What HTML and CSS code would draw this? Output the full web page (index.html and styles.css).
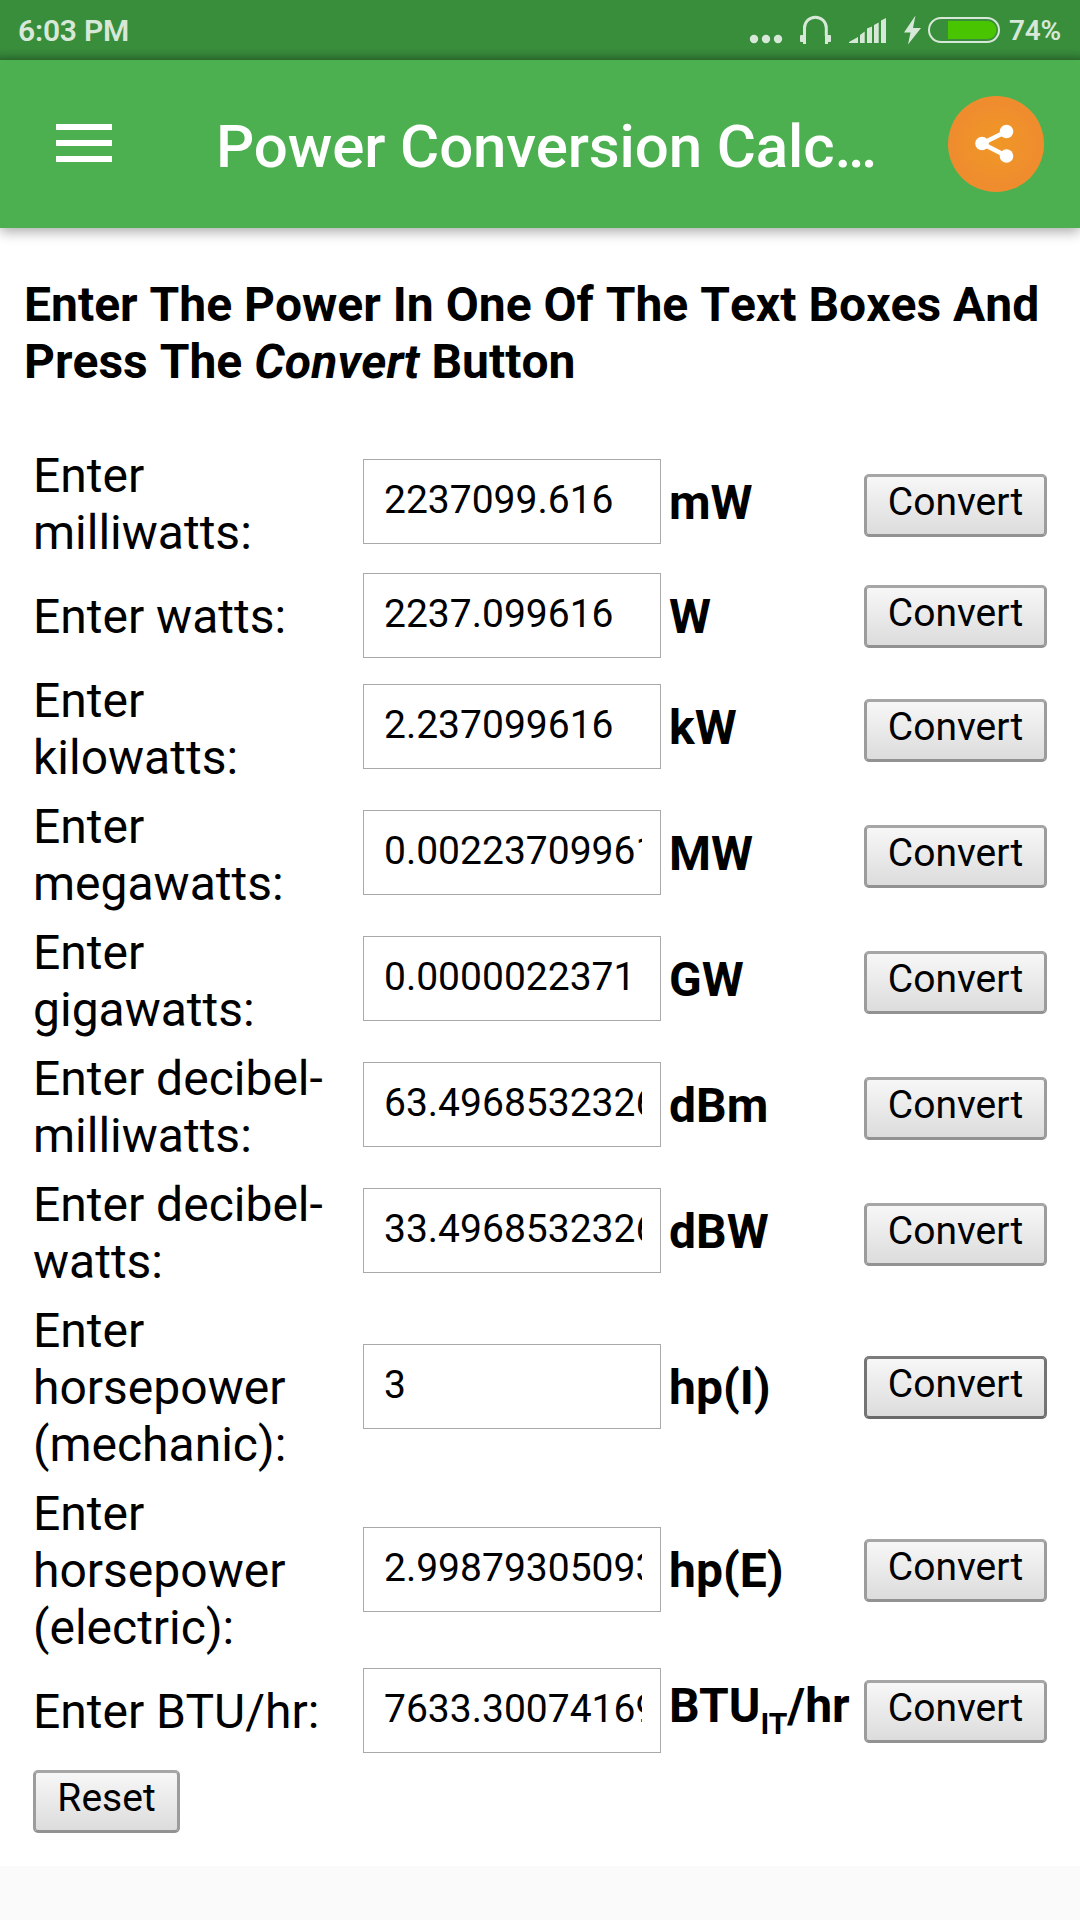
FILE: index.html
```html
<!DOCTYPE html>
<html>
<head>
	<meta charset="utf-8">
	<title>Power Conversion Calculator</title>
	<link rel="stylesheet" href="styles.css">
</head>
<body>
	<div class="statusbar">
		<span class="clock">6:03 PM</span>
		<svg class="status-icons" width="260" height="60" viewBox="745 0 260 60">
			<g fill="#d8e8d8">
				<circle cx="754" cy="39" r="4.2"/>
				<circle cx="766" cy="39" r="4.2"/>
				<circle cx="778" cy="39" r="4.2"/>
				<path d="M800 36q0-1 1-1h5v9h-3v-2h-2q-1 0-1-1zM831 36q0-1-1-1h-5v9h3v-2h2q1 0 1-1z"/>
				<path d="M849 43v-1l9-5v6zM860 43v-8l4.700-3.500v11.500zM867 43v-14.500l5-2v16.500zM874 43v-18l4.700-2.500v20.500zM881 43v-22.500l5-2.500v25z"/>
				<path d="M915.500 15.500L904 32.500h6.500L908 44.500L921 28h-8z"/>
			</g>
			<path d="M804.500 36V28a10.900 10.900 0 0 1 21.800 0V36" fill="none" stroke="#d8e8d8" stroke-width="3"/>
			<rect x="929" y="18" width="70" height="24" rx="12" fill="none" stroke="#d8e8d8" stroke-width="2"/>
			<path d="M948 21h40a8.500 9 0 0 1 0 18h-40z" fill="#48c400"/>
		</svg>
		<span class="percent">74%</span>
	</div>

	<div class="toolbar">
		<div class="menu">
			<span></span>
			<span></span>
			<span></span>
		</div>
		<div class="title">Power Conversion Calc…</div>
		<div class="share">
			<svg width="96" height="96" viewBox="0 0 96 96">
				<path d="M58.500 35.500L34 47.500l24.500 12.500" fill="none" stroke="#fff" stroke-width="4.500"/>
				<circle cx="34" cy="47.500" r="6.800" fill="#fff"/>
				<circle cx="58.500" cy="35.500" r="6.800" fill="#fff"/>
				<circle cx="58.500" cy="60" r="6.800" fill="#fff"/>
			</svg>
		</div>
	</div>

	<div class="content">
		<h3>Enter The Power In One Of The Text Boxes And<br>Press The <i>Convert</i> Button</h3>

		<table>
			<tr class="two">
				<td class="label">Enter<br>milliwatts:</td>
				<td class="field"><input type="text" value="2237099.616"></td>
				<td class="unit">mW</td>
				<td class="action"><button>Convert</button></td>
			</tr>
			<tr class="one">
				<td class="label">Enter watts:</td>
				<td class="field"><input type="text" value="2237.099616"></td>
				<td class="unit">W</td>
				<td class="action"><button>Convert</button></td>
			</tr>
			<tr class="two">
				<td class="label">Enter<br>kilowatts:</td>
				<td class="field"><input type="text" value="2.237099616"></td>
				<td class="unit">kW</td>
				<td class="action"><button>Convert</button></td>
			</tr>
			<tr class="two">
				<td class="label">Enter<br>megawatts:</td>
				<td class="field"><input type="text" value="0.002237099616"></td>
				<td class="unit">MW</td>
				<td class="action"><button>Convert</button></td>
			</tr>
			<tr class="two">
				<td class="label">Enter<br>gigawatts:</td>
				<td class="field"><input type="text" value="0.0000022371"></td>
				<td class="unit">GW</td>
				<td class="action"><button>Convert</button></td>
			</tr>
			<tr class="two">
				<td class="label">Enter decibel-<br>milliwatts:</td>
				<td class="field"><input type="text" value="63.4968532326"></td>
				<td class="unit">dBm</td>
				<td class="action"><button>Convert</button></td>
			</tr>
			<tr class="two">
				<td class="label">Enter decibel-<br>watts:</td>
				<td class="field"><input type="text" value="33.4968532326"></td>
				<td class="unit">dBW</td>
				<td class="action"><button>Convert</button></td>
			</tr>
			<tr class="three">
				<td class="label">Enter<br>horsepower<br>(mechanic):</td>
				<td class="field"><input type="text" value="3"></td>
				<td class="unit">hp(I)</td>
				<td class="action"><button class="pressed">Convert</button></td>
			</tr>
			<tr class="three">
				<td class="label">Enter<br>horsepower<br>(electric):</td>
				<td class="field"><input type="text" value="2.998793050933"></td>
				<td class="unit">hp(E)</td>
				<td class="action"><button>Convert</button></td>
			</tr>
			<tr class="one last">
				<td class="label">Enter BTU/hr:</td>
				<td class="field"><input type="text" value="7633.300741699"></td>
				<td class="unit">BTU<sub>IT</sub>/hr</td>
				<td class="action"><button>Convert</button></td>
			</tr>
		</table>
		<button class="reset">Reset</button>
	</div>
</body>
</html>
```
FILE: styles.css
```css
* {
    box-sizing: border-box;
}

body {
    margin: 0;
    background-color: #fafafa;
    font-family: Roboto, sans-serif;
    color: #000;
}

.statusbar {
    display: flex;
    height: 60px;
    padding-left: 18px;
    background: linear-gradient(#398e3c 48px, #358438 54px, #2d702f 60px);
    color: #d8e8d8;
    font-weight: 600;
    line-height: 62px;
}

.clock {
    width: 727px;
    font-size: 30px;
    letter-spacing: -0.2px;
}

.percent {
    padding-left: 4px;
    font-size: 28px;
    letter-spacing: -0.2px;
}

.toolbar {
    display: flex;
    align-items: center;
    height: 168px;
    padding-left: 56px;
    background-color: #4db050;
    box-shadow: 0 4px 12px rgba(0, 0, 0, 0.33);
    position: relative;
}

.menu {
    display: flex;
    flex-direction: column;
    gap: 10px;
    width: 56px;
    padding-bottom: 2px;
}

.menu span {
    height: 6px;
    background-color: #fff;
}

.title {
    width: 732px;
    margin-left: 104px;
    padding-top: 6px;
    font-size: 60px;
    font-weight: 500;
    line-height: 70px;
    letter-spacing: -0.11px;
    color: #fff;
    white-space: nowrap;
}

.share {
    width: 96px;
    height: 96px;
    border-radius: 50%;
    background: radial-gradient(#f09826 0, #ef8d2e 60%);
}

.share svg {
    display: block;
}

.content {
    height: 1638px;
    padding: 48px 24px 0;
    background-color: #fff;
}

h3 {
    margin: 0 0 48px;
    font-size: 48px;
    line-height: 57px;
    white-space: nowrap;
    font-kerning: none;
}

h3 i {
    letter-spacing: 0.15px;
}

table {
    width: 1032px;
    table-layout: fixed;
    border-spacing: 6px;
    font-size: 48px;
    line-height: 57px;
}

td {
    padding: 3px;
    vertical-align: top;
    white-space: nowrap;
}

.label {
    width: 324px;
}

.field {
    width: 300px;
}

.unit {
    width: 189px;
    font-weight: bold;
}

.action {
    width: 189px;
}

/* one, two and three line labels */
.one { height: 93px; }
.one .label, .one .unit { padding-top: 18px; }
.one .action { padding-top: 15px; }

.two { height: 120px; }
.two .field { padding-top: 15px; }
.two .unit, .two .action { padding-top: 30px; }

.three { height: 177px; }
.three .field { padding-top: 45px; }
.three .unit { padding-top: 60px; }
.three .action { padding-top: 57px; }

.last .unit { padding-top: 12px; }

input {
    display: block;
    width: 298px;
    height: 85px;
    padding: 16px 18px 20px 20px;
    border: 1px solid #a9a9a9;
    background-color: #fff;
    font-family: Roboto, sans-serif;
    font-size: 39px;
    color: #000;
}

button {
    display: block;
    width: 183px;
    height: 63px;
    padding: 0 0 6px;
    border: 3px solid #9c9c9c;
    border-top-color: #a6a6a6;
    border-bottom-color: #929292;
    border-radius: 5px;
    background: linear-gradient(#f7f7f7, #dcdcdc);
    font-family: Roboto, sans-serif;
    font-size: 39px;
    line-height: 47px;
    color: #000;
}

.pressed {
    border-color: #7c7c7c #747474 #6a6a6a;
}

.reset {
    width: 147px;
    margin: 6px 0 0 9px;
}

sub {
    font-size: 30px;
    line-height: 0;
    vertical-align: -12px;
}
```
